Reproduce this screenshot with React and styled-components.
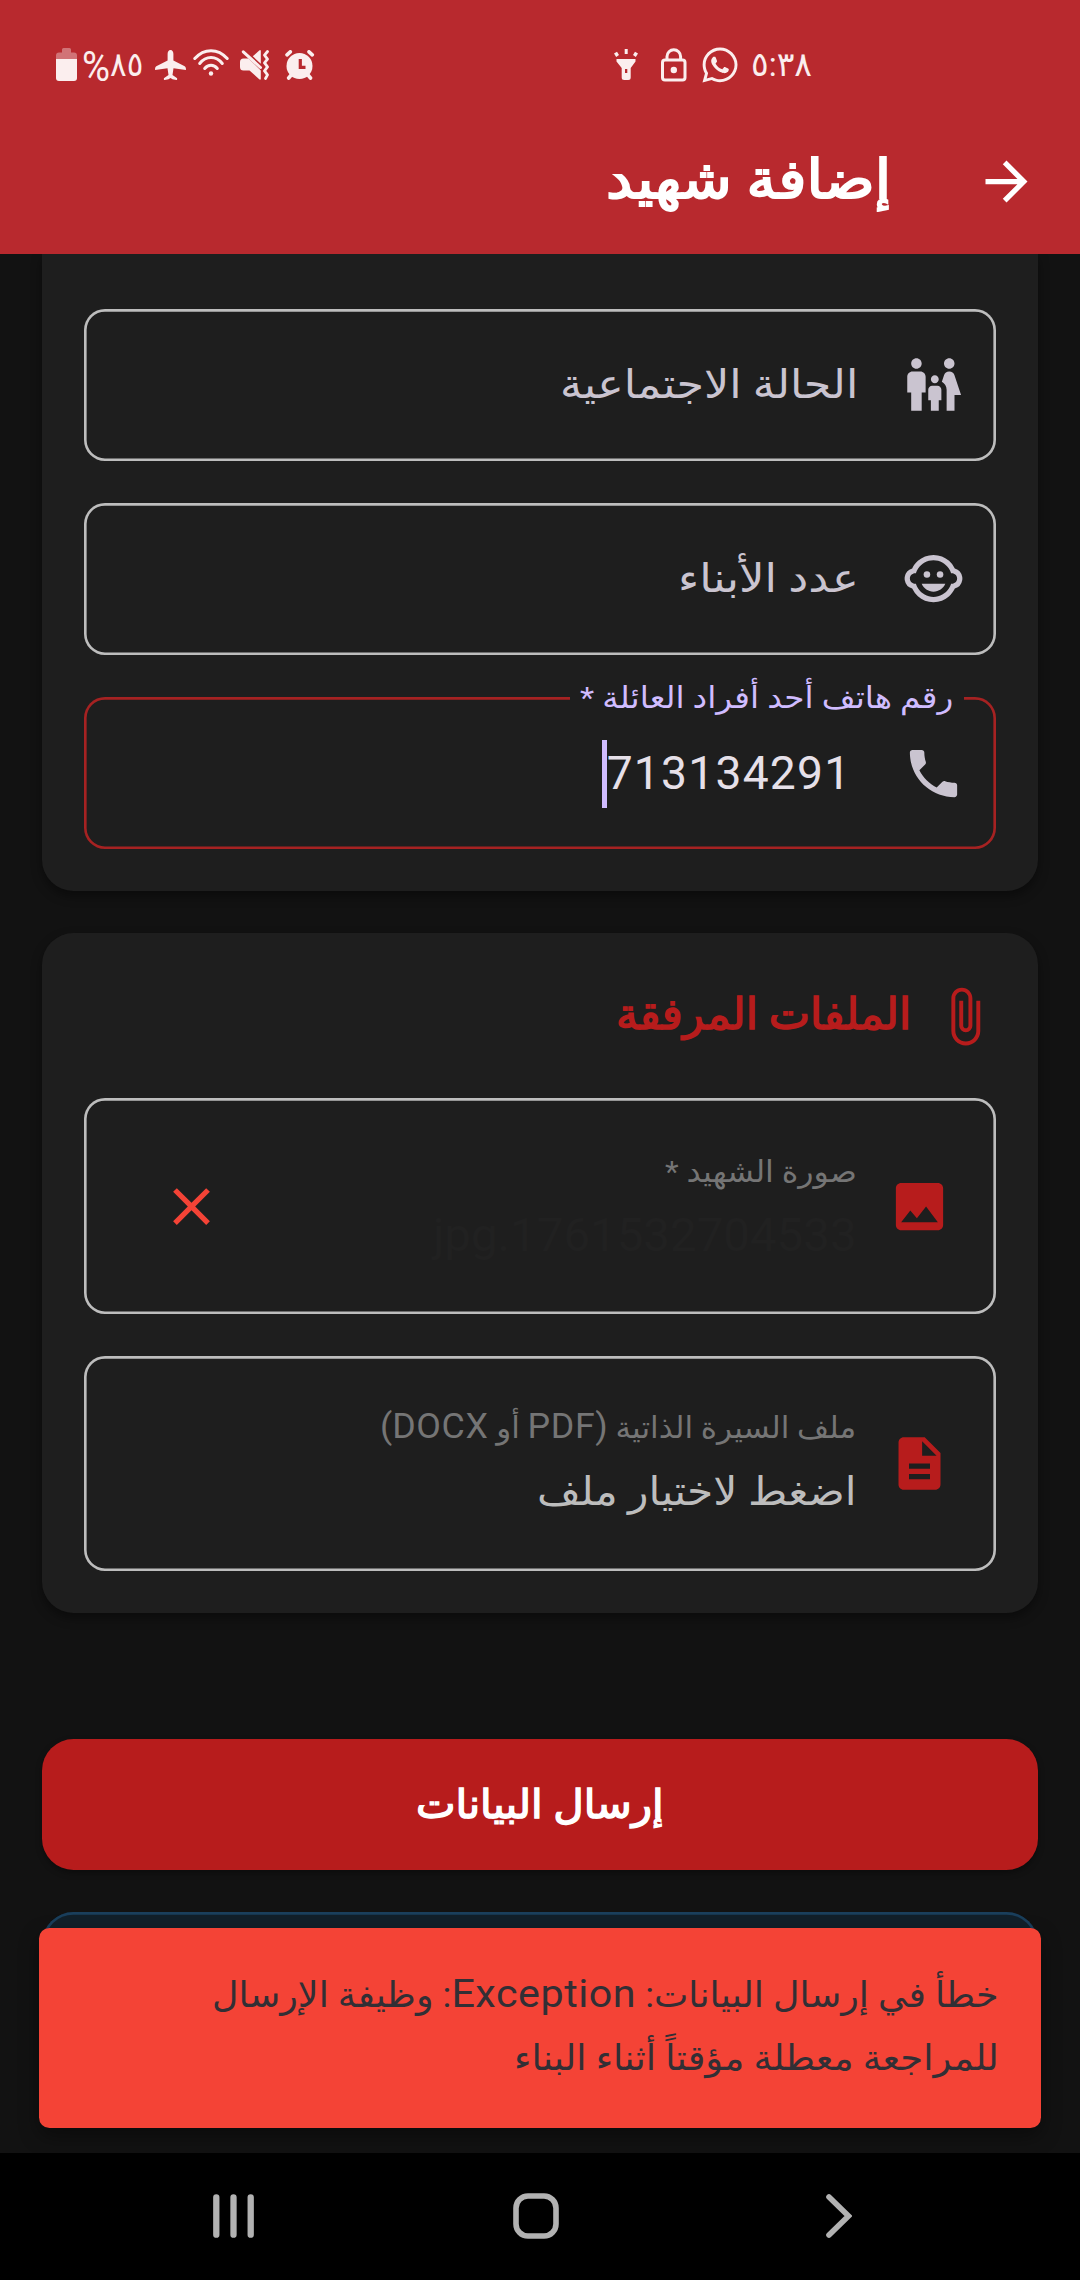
import React, { useLayoutEffect, useRef, useState } from "react";
import styled, { createGlobalStyle } from "styled-components";
import {
  MdArrowForward,
  MdAttachFile,
  MdChildCare,
  MdClose,
  MdDescription,
  MdFamilyRestroom,
  MdImage,
  MdPhone,
} from "react-icons/md";
import { FaWhatsapp } from "react-icons/fa";

const GlobalStyle = createGlobalStyle`
  * { box-sizing: border-box; }
  body {
    margin: 0;
    background: #121212;
    font-family: Roboto, "DejaVu Sans", sans-serif;
  }
`;

const Screen = styled.div`
  width: 1080px;
  height: 2280px;
  display: flex;
  flex-direction: column;
  overflow: hidden;
  background: #121212;
`;

/* ---------- text ---------- */

const TextSlot = styled.div`
  width: ${(p) => p.$width}px;
  height: ${(p) => p.$line}px;
  flex: none;
  display: flex;
  justify-content: flex-start;
  direction: rtl;
`;

const TextRun = styled.span`
  flex: none;
  white-space: nowrap;
  transform-origin: right center;
  font-size: ${(p) => p.$size}px;
  line-height: ${(p) => p.$line}px;
  font-weight: 400;
  -webkit-text-stroke: ${(p) => p.$stroke || 0}px ${(p) => p.$color};
  color: ${(p) => p.$color};
`;

const Latin = styled.span`
  font-size: ${(p) => p.$size}px;
  letter-spacing: ${(p) => p.$spacing || 0}px;
`;

const Percent = styled.span`
  font-size: 42px;
  line-height: 1;
  vertical-align: -5px;
`;

/* One line of text condensed or widened to fill its slot. */
function Line({ width, size, line, stroke, color, children }) {
  const ref = useRef(null);
  const [scale, setScale] = useState(1);
  useLayoutEffect(() => {
    const natural = ref.current.offsetWidth;
    if (natural) setScale(width / natural);
  }, [width, size]);
  return (
    <TextSlot $width={width} $line={line}>
      <TextRun
        ref={ref}
        $size={size}
        $line={line}
        $stroke={stroke}
        $color={color}
        style={{ transform: `scaleX(${scale})` }}
      >
        {children}
      </TextRun>
    </TextSlot>
  );
}

/* ---------- header ---------- */

const Header = styled.header`
  height: 254px;
  flex: none;
  background: #b8292e;
  display: flex;
  flex-direction: column;
`;

const StatusBar = styled.div`
  height: 108px;
  padding: 22px 268px 0 56px;
  display: flex;
  align-items: center;
  justify-content: space-between;
  color: #fbeeee;
`;

const StatusGroup = styled.div`
  display: flex;
  align-items: center;
`;

const StatusIcon = styled.svg`
  flex: none;
  display: block;
  margin-left: ${(p) => p.$gap || 0}px;
`;

const StatusSlot = styled.div`
  display: flex;
  margin: 0 0 ${(p) => p.$lift || 0}px ${(p) => p.$gap || 0}px;
`;

const TitleBar = styled.div`
  height: 146px;
  display: flex;
  align-items: center;
  direction: rtl;
  padding: 0 42px 2px 0;
  gap: 84px;
  color: #ffffff;
`;

function BatteryIcon() {
  return (
    <StatusIcon width="21" height="34" viewBox="0 0 21 34">
      <path d="M6 1.500q0-1.500 1.500-1.500h6q1.500 0 1.500 1.500V4.500h3q3 0 3 3V12H0V7.500q0-3 3-3h3z" fill="#fff" opacity=".35" />
      <path d="M0 11h21v19q0 3-3 3H3q-3 0-3-3z" fill="currentColor" />
    </StatusIcon>
  );
}

function PlaneIcon() {
  return (
    <StatusIcon $gap={12} width="31" height="30" viewBox="0 0 31 30">
      <path
        d="M15.500 0c1.900 0 2.900 1.700 2.900 4v6.500l10.800 5.600c1.500.8 1.900 1.800 1.700 3.900l-12.400-1.800-1 6.900 4.300 3c.7.600.5 1.900-.5 1.900l-3.800-.8-2-1.100-2 1.100-3.800.8c-1 0-1.200-1.300-.5-1.900l4.300-3-1-6.900L.1 20c-.2-2.100.2-3.100 1.700-3.900l10.800-5.600V4c0-2.300 1-4 2.900-4z"
        fill="currentColor"
      />
    </StatusIcon>
  );
}

function WifiIcon() {
  return (
    <StatusIcon $gap={7} width="36" height="32" viewBox="0 0 36 32">
      <g fill="none" stroke="currentColor" strokeWidth="3" strokeLinecap="round">
        <path d="M1.800 9.500C11-1 25-1 34.200 9.500" />
        <path d="M6.700 14.500C13 6.500 23 6.500 29.300 14.500" />
        <path d="M11.700 19.500c3.500-4.300 9.100-4.300 12.600 0" />
      </g>
      <circle cx="18" cy="24.500" r="2.200" fill="currentColor" />
    </StatusIcon>
  );
}

function MuteIcon() {
  return (
    <StatusIcon $gap={11} width="30" height="30" viewBox="0 0 30 30">
      <path d="M3.500 8.500h5L20.800 20.500V29.500H19.500L9.500 20.500h-6Q0 20.500 0 17v-5Q0 8.500 3.500 8.500z" fill="currentColor" />
      <path d="M12.800 6.300L19.500.3h1.300V13.700z" fill="currentColor" />
      <path d="M3.300 1.800L20.500 17.500" stroke="currentColor" strokeWidth="3" strokeLinecap="round" />
      <path d="M27.500 1.500l-3 3.600 3 4-3 3.800 3 4-3 4 3 4-2 3.600" fill="none" stroke="currentColor" strokeWidth="2.800" strokeLinecap="round" strokeLinejoin="round" />
    </StatusIcon>
  );
}

function AlarmIcon() {
  return (
    <StatusIcon $gap={15} width="30" height="30" viewBox="0 0 30 30">
      <circle cx="14.500" cy="16" r="13" fill="currentColor" />
      <g stroke="currentColor" strokeWidth="3.600" strokeLinecap="round">
        <path d="M2 4.800l3.300-3M27.300 4.800L24 1.800M3.700 28l2.500-3M25.500 28L23 25" />
      </g>
      <path d="M15.300 9v8.300H20.500" fill="none" stroke="#b8292e" strokeWidth="3.200" />
    </StatusIcon>
  );
}

function TorchIcon() {
  return (
    <StatusIcon width="24" height="32" viewBox="0 0 24 32">
      <path d="M10.700 0h3v5h-3zM0 4.500l3-1.800 2 3.200-2.800 2zM24 4.500l-3-1.800-2 3.200 2.800 2z" fill="currentColor" />
      <path fillRule="evenodd" d="M2.500 10h19v2.500L16.700 19v9.500q0 2.500-2.500 2.500h-4q-2.500 0-2.500-2.500V19L2.500 12.500zM11 20v4h2.300v-4z" fill="currentColor" />
    </StatusIcon>
  );
}

function LockIcon() {
  return (
    <StatusIcon $gap={22.5} width="26" height="34" viewBox="0 0 26 34">
      <rect x="1.500" y="12" width="22.500" height="20" rx="2.500" fill="none" stroke="currentColor" strokeWidth="3" />
      <path d="M6 12V8.500a6.800 6.800 0 0 1 13.600 0V12" fill="none" stroke="currentColor" strokeWidth="3" />
      <circle cx="12.800" cy="22" r="3.200" fill="currentColor" />
    </StatusIcon>
  );
}

/* ---------- content ---------- */

const Content = styled.main`
  height: 1899px;
  flex: none;
  position: relative;
  overflow: hidden;
  padding: 0 42px;
  display: flex;
  flex-direction: column;
`;

const Card = styled.section`
  flex: none;
  background: #1e1e1e;
  border-radius: ${(p) => (p.$continued ? "0 0 31.500px 31.500px" : "31.500px")};
  padding: ${(p) => p.$top}px 42px 42px;
  margin-bottom: ${(p) => p.$after}px;
  display: flex;
  flex-direction: column;
  gap: ${(p) => p.$gap}px;
  box-shadow: 0 5px 11px rgba(0, 0, 0, 0.4);
`;

const Field = styled.div`
  position: relative;
  direction: rtl;
  height: ${(p) => p.$height}px;
  border-radius: 21px;
  box-shadow: inset 0 0 0 2.625px ${(p) => (p.$error ? "#a62222" : "#bdbdbd")};
  display: flex;
  align-items: center;
  padding-right: ${(p) => (p.$file ? 45 : 31.5)}px;
  gap: ${(p) => (p.$file ? 31.5 : 43)}px;
  color: ${(p) => (p.$file ? "#b71c1c" : "#cac4d0")};

  svg {
    flex: none;
  }
`;

const FileList = styled.div`
  margin-top: 50px;
  display: flex;
  flex-direction: column;
  gap: 42px;
`;

const FloatingLabel = styled.div`
  position: absolute;
  top: -21px;
  right: 32px;
  padding: 0 11px 0 10px;
  background: #1e1e1e;
`;

const PhoneValue = styled.div`
  display: flex;
  align-items: center;
  direction: ltr;
  margin-right: 7px;
  color: #e6e0e9;
  font-size: 46.200px;
  line-height: 60px;
  letter-spacing: 1.250px;
`;

const Caret = styled.span`
  width: 5px;
  height: 68px;
  background: #d0bcff;
  margin-top: 2px;
`;

const SectionTitle = styled.div`
  height: 63px;
  display: flex;
  align-items: center;
  direction: rtl;
  gap: 22px;
  color: #b71c1c;

  & > div {
    margin-bottom: 5px;
  }
`;

const FileText = styled.div`
  flex: 1;
  display: flex;
  flex-direction: column;
  padding-top: ${(p) => p.$top}px;
`;

const RemoveButton = styled.button`
  width: 126px;
  height: 126px;
  margin-left: 44px;
  padding: 0;
  border: 0;
  background: none;
  color: #f44336;
  display: flex;
  align-items: center;
  justify-content: center;
`;

const SubmitButton = styled.button`
  flex: none;
  height: 131px;
  border: 0;
  border-radius: 31.500px;
  background: #b71c1c;
  display: flex;
  align-items: center;
  justify-content: center;
  padding: 0;
  font-family: inherit;
  box-shadow: 0 3px 6px rgba(0, 0, 0, 0.35);
`;

const InfoPanel = styled.div`
  flex: none;
  height: 200px;
  margin-top: 42px;
  border-radius: 31.500px;
  background: #12202a;
  box-shadow: inset 0 0 0 2.625px #1a3f5c;
`;

const Snackbar = styled.div`
  position: absolute;
  left: 39.400px;
  top: 1674px;
  width: 1001.200px;
  height: 200px;
  border-radius: 10.500px;
  background: #f44336;
  box-shadow: 0 8px 20px rgba(0, 0, 0, 0.4);
  direction: rtl;
  padding: 34px 42px 0 0;
  display: flex;
  flex-direction: column;
  gap: 1.500px;
`;

/* ---------- navigation ---------- */

const NavBar = styled.nav`
  flex: 1;
  background: #000;
  display: flex;
  align-items: center;
  padding: 0 0 2px 213px;
`;

const NavIcon = styled.svg`
  flex: none;
  margin-right: ${(p) => p.$after || 0}px;
`;

export default function App() {
  return (
    <Screen>
      <GlobalStyle />
      <Header>
        <StatusBar>
          <StatusGroup>
            <BatteryIcon />
            <StatusSlot $gap={5} $lift={3}>
              <Line width={61} size={34} line={40} color="#fbeeee">
                <span dir="ltr"><Percent>%</Percent>٨٥</span>
              </Line>
            </StatusSlot>
            <PlaneIcon />
            <WifiIcon />
            <MuteIcon />
            <AlarmIcon />
          </StatusGroup>
          <StatusGroup>
            <TorchIcon />
            <LockIcon />
            <StatusSlot $gap={13}>
              <FaWhatsapp size={40} />
            </StatusSlot>
            <StatusSlot $gap={11.5} $lift={2}>
              <Line width={61} size={34} line={42} color="#fbeeee">
                ٥:٣٨
              </Line>
            </StatusSlot>
          </StatusGroup>
        </StatusBar>
        <TitleBar>
          <MdArrowForward size={63} style={{ marginTop: 2 }} />
          <Line width={285} size={54} line={80} stroke={2} color="#ffffff">
            إضافة شهيد
          </Line>
        </TitleBar>
      </Header>

      <Content>
        <Card $continued $top={54.5} $after={42} $gap={42}>
          <Field $height={152.25}>
            <MdFamilyRestroom size={63} />
            <Line width={298} size={40} line={60} color="#cac4d0">
              الحالة الاجتماعية
            </Line>
          </Field>
          <Field $height={152.25}>
            <MdChildCare size={63} />
            <Line width={181} size={40} line={60} color="#cac4d0">
              عدد الأبناء
            </Line>
          </Field>
          <Field $height={152.25} $error>
            <FloatingLabel>
              <Line width={373} size={30} line={44} color="#d0bcff">
                رقم هاتف أحد أفراد العائلة *
              </Line>
            </FloatingLabel>
            <MdPhone size={63} />
            <PhoneValue>
              <Caret />
              713134291
            </PhoneValue>
          </Field>
        </Card>

        <Card $top={52} $after={126} $gap={0}>
          <SectionTitle>
            <MdAttachFile size={63} />
            <Line width={295} size={43} line={60} stroke={1.5} color="#b71c1c">
              الملفات المرفقة
            </Line>
          </SectionTitle>
          <FileList>
            <Field $height={216} $file>
              <MdImage size={63} />
              <FileText $top={4}>
                <Line width={192} size={30} line={54} color="#757575">
                  صورة الشهيد *
                </Line>
                <Line width={424} size={46.2} line={72} color="#212121">
                  1761532704533.jpg
                </Line>
              </FileText>
              <RemoveButton aria-label="remove">
                <MdClose size={63} />
              </RemoveButton>
            </Field>
            <Field $height={215} $file>
              <MdDescription size={63} />
              <FileText $top={3}>
                <Line width={476} size={30} line={52} color="#757575">
                  ملف السيرة الذاتية <Latin $size={34.6} $spacing={0.6}>(PDF</Latin> أو <Latin $size={34.6} $spacing={0.6}>DOCX)</Latin>
                </Line>
                <Line width={319} size={40} line={79} color="#bdbdbd">
                  اضغط لاختيار ملف
                </Line>
              </FileText>
            </Field>
          </FileList>
        </Card>

        <SubmitButton>
          <Line width={248} size={40} line={60} stroke={1.4} color="#ffffff">
            إرسال البيانات
          </Line>
        </SubmitButton>
        <InfoPanel />

        <Snackbar>
          <Line width={787} size={35} line={63} color="#322f35">
            خطأ في إرسال البيانات: <Latin $size={39.6} $spacing={0.5}>Exception</Latin>: وظيفة الإرسال
          </Line>
          <Line width={485} size={35} line={63} color="#322f35">
            للمراجعة معطلة مؤقتاً أثناء البناء
          </Line>
        </Snackbar>
      </Content>

      <NavBar>
        <NavIcon $after={259} width="41" height="44" viewBox="0 0 41 44">
          <path d="M3.300 3.300v37.400M20.500 3.300v37.400M37.700 3.300v37.400" stroke="#b2b2b2" strokeWidth="6.300" strokeLinecap="round" />
        </NavIcon>
        <NavIcon $after={267} width="46" height="46" viewBox="0 0 46 46">
          <rect x="3" y="3" width="40" height="40" rx="12" fill="none" stroke="#b2b2b2" strokeWidth="5.600" />
        </NavIcon>
        <NavIcon width="26" height="44" viewBox="0 0 26 44">
          <path d="M3 3l19.500 19L3 41" fill="none" stroke="#b2b2b2" strokeWidth="5.600" strokeLinecap="round" />
        </NavIcon>
      </NavBar>
    </Screen>
  );
}
